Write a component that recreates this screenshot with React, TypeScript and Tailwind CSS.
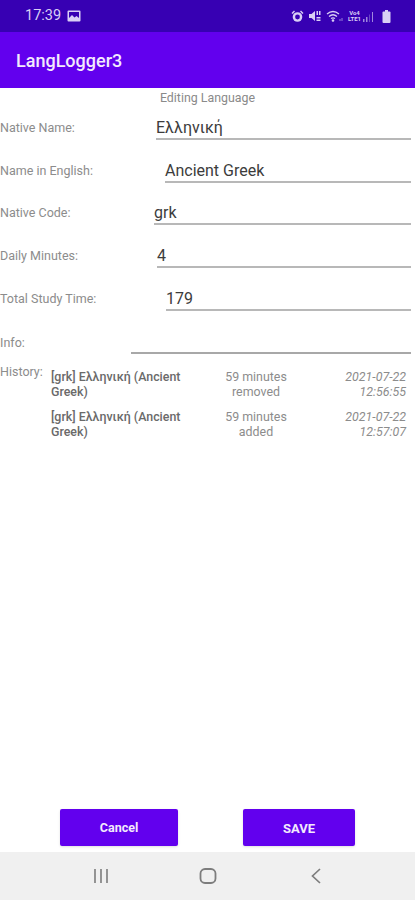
import React from 'react';

const fields = [
    { label: 'Native Name:', value: 'Ελληνική', labelWidth: 'w-[156px]' },
    { label: 'Name in English:', value: 'Ancient Greek', labelWidth: 'w-[165px]' },
    { label: 'Native Code:', value: 'grk', labelWidth: 'w-[154px]' },
    { label: 'Daily Minutes:', value: '4', labelWidth: 'w-[157px]' },
    { label: 'Total Study Time:', value: '179', labelWidth: 'w-[166px]' },
];

const history = [
    { name: '[grk] Ελληνική (Ancient Greek)', minutes: '59 minutes', action: 'removed', date: '2021-07-22', time: '12:56:55' },
    { name: '[grk] Ελληνική (Ancient Greek)', minutes: '59 minutes', action: 'added', date: '2021-07-22', time: '12:57:07' },
];

const StatusIcons = () => (
    <div className="flex items-center gap-[5px] text-[#d9cff5]">
        {/* alarm */}
        <svg width="13" height="13" viewBox="0 0 13 13" fill="currentColor">
            <circle cx="6.5" cy="7" r="4.8" />
            <circle cx="6.5" cy="7" r="2.4" fill="#3700b3" />
            <path d="M0.5 3 L3 0.5 L4 1.5 L1.5 4 Z M12.5 3 L10 0.5 L9 1.5 L11.5 4 Z" />
        </svg>
        {/* mute / NFC */}
        <svg width="12" height="12" viewBox="0 0 12 12" fill="currentColor">
            <path d="M0 4 H2.5 L6 1 V11 L2.5 8 H0 Z" />
            <rect x="7.5" y="1" width="1.5" height="4" />
            <rect x="10" y="1" width="1.5" height="4" />
            <rect x="7.5" y="7" width="4" height="1.5" />
            <rect x="7.5" y="9.5" width="4" height="1.5" />
        </svg>
        {/* wifi */}
        <svg width="17" height="12" viewBox="0 0 17 12" fill="none" stroke="currentColor" strokeWidth="1.3">
            <path d="M1 4 Q7 -1 13 4" />
            <path d="M3 6.5 Q7 3 11 6.5" />
            <path d="M5 8.6 Q7 7 9 8.6" />
            <circle cx="7" cy="10.5" r="0.7" fill="currentColor" />
            <path d="M14 9 V11 M16 8 V11" strokeWidth="1" opacity="0.6" />
        </svg>
        {/* volte + signal */}
        <div className="flex items-end gap-[1px]">
            <div className="flex flex-col items-center font-['Roboto',sans-serif] text-[6px] font-bold leading-[6px]">
                <span>Vo4</span>
                <span>LTE1</span>
            </div>
            <svg width="12" height="11" viewBox="0 0 12 11" fill="currentColor" opacity="0.65">
                <rect x="1" y="8" width="1.5" height="3" />
                <rect x="4" y="6" width="1.5" height="5" />
                <rect x="7" y="3.5" width="1" height="7.5" opacity="0.5" />
                <rect x="10" y="1" width="1" height="10" />
            </svg>
        </div>
        {/* battery */}
        <svg width="9" height="13" viewBox="0 0 9 13" fill="currentColor" className="ml-[3px]">
            <rect x="3" y="0" width="3" height="2" />
            <rect x="0.5" y="1.5" width="8" height="11.5" rx="1" />
        </svg>
    </div>
);

const App: React.FC = () => {
    return (
        <div className="flex h-[900px] w-[415px] flex-col overflow-hidden bg-white font-['Roboto',sans-serif]">
            <div className="flex h-8 items-center justify-between bg-[#3700b3] pl-[25px] pr-[24px]">
                <div className="flex items-center gap-[6px]">
                    <span className="text-[14.5px] text-[#d9cff5]">17:39</span>
                    <svg width="14" height="12" viewBox="0 0 14 12" className="text-[#d9cff5]" fill="currentColor">
                        <path fillRule="evenodd" d="M1.5 0.5 H12.5 Q13.5 0.5 13.5 1.5 V10.5 Q13.5 11.5 12.5 11.5 H1.5 Q0.5 11.5 0.5 10.5 V1.5 Q0.5 0.5 1.5 0.5 Z M2 2 V8 L5 5 L7.5 7.5 L9.5 6 L12 8 V2 Z" />
                    </svg>
                </div>
                <StatusIcons />
            </div>

            <div className="flex h-[56px] items-center bg-[#6200ee] pl-4">
                <span className="text-[18px] font-medium text-[#f3eafd]">LangLogger3</span>
            </div>

            <div className="flex min-h-0 flex-1 flex-col">
                <p className="mt-[3px] text-center text-[12.4px] leading-[14px] text-[#8a8a8a]">Editing Language</p>

                <div className="-mt-[8px] flex flex-col pr-1">
                    {fields.map((field) => (
                        <div key={field.label} className="flex h-[42.8px] items-end">
                            <span className={`${field.labelWidth} pb-[2px] text-[12.5px] leading-[20px] text-[#8c8c8c]`}>
                                {field.label}
                            </span>
                            <div className="flex-1 border-b-2 border-[#b8b8b8] text-[16px] leading-[20px] text-[#3c3c3c]">
                                {field.value}
                            </div>
                        </div>
                    ))}

                    <div className="flex h-[43px] items-end">
                        <span className="w-[131px] pb-[1px] text-[12.5px] leading-[20px] text-[#8c8c8c]">Info:</span>
                        <div className="h-[26px] flex-1 border-b-2 border-[#a8a8a8]" />
                    </div>
                </div>

                <div className="mt-[7px] flex pr-[9px]">
                    <span className="w-[51px] pt-[4px] text-[12.5px] leading-[14px] text-[#8c8c8c]">History:</span>
                    <div className="flex flex-1 flex-col gap-[10px] pt-[8px]">
                        {history.map((entry) => (
                            <div key={entry.time} className="flex text-[12.4px] leading-[15px]">
                                <span className="w-[140px] font-medium text-[#6a6a6a]">{entry.name}</span>
                                <span className="w-[130px] text-center text-[#8c8c8c]">
                                    {entry.minutes}
                                    <br />
                                    {entry.action}
                                </span>
                                <span className="flex-1 text-right italic text-[#8c8c8c]">
                                    {entry.date}
                                    <br />
                                    {entry.time}
                                </span>
                            </div>
                        ))}
                    </div>
                </div>

                <div className="mt-auto mb-[6px] flex pl-[60px]">
                    <button className="h-[37px] w-[118px] rounded-[2px] bg-[#6200ee] pt-[2px] text-[12.5px] font-bold text-[#f3eafd] shadow-sm">
                        Cancel
                    </button>
                    <button className="ml-[65px] h-[37px] w-[112px] rounded-[2px] bg-[#6200ee] pt-[2px] text-[13px] font-bold text-[#f3eafd] shadow-sm">
                        SAVE
                    </button>
                </div>
            </div>

            <div className="flex h-[48px] items-center bg-[#f0f0f0] pl-[93px]">
                <svg width="16" height="16" viewBox="0 0 16 16" fill="none" stroke="#7d7d7d" strokeWidth="1.6">
                    <path d="M2 1 V15 M8 1 V15 M14 1 V15" />
                </svg>
                <svg width="18" height="16" viewBox="0 0 18 16" fill="none" stroke="#7d7d7d" strokeWidth="1.8" className="ml-[90px]">
                    <rect x="1.5" y="1" width="15" height="14" rx="4.5" />
                </svg>
                <svg width="12" height="16" viewBox="0 0 12 16" fill="none" stroke="#7d7d7d" strokeWidth="1.7" className="ml-[93px]">
                    <path d="M10 1 L2.5 8 L10 15" />
                </svg>
            </div>
        </div>
    );
};

export default App;
